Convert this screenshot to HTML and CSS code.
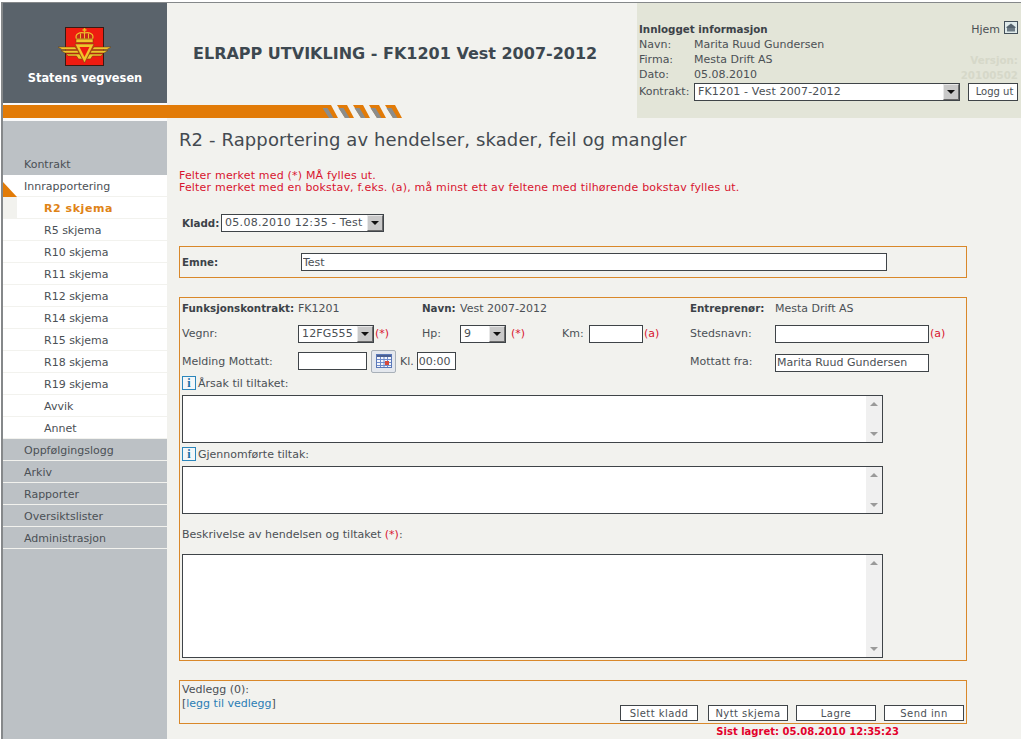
FILE: index.html
```html
<!DOCTYPE html>
<html lang="no">
<head>
<meta charset="utf-8">
<title>ELRAPP</title>
<link rel="stylesheet" href="styles.css">
</head>
<body>
<div class="page">
  <header class="header">
    <div class="header-left">
      <div class="brand-row">
        <div class="brand">
          <svg class="logo" width="60" height="39" viewBox="0 0 60 39">
            <rect x="10.500" y=".5" width="38" height="38" fill="#ee1c10" stroke="#3a1a12"/>
            <!-- crown -->
            <path d="M29.500 1v5M27.500 3h4" stroke="#e8b820" stroke-width="1.500" fill="none"/>
            <path d="M21.500 12c-2-5 3-7 8-6 5-1 10 1 8 6z" fill="#c8281a" stroke="#eec02a" stroke-width="1.200"/>
            <path d="M25.500 6.500v5.500M29.500 6v6M33.500 6.500v5.500" stroke="#eec02a"/>
            <rect x="21" y="12" width="17" height="3.500" fill="#f2c42a" stroke="#6b3a10" stroke-width=".5"/>
            <!-- wings -->
            <path d="M3 20h17l2 2.500H7z M6 23.500h16.500l1.500 2.500H10z M11 27h13.500l3 5h-4l-2-3H13z" fill="#efc52c" stroke="#6b3a10" stroke-width=".5"/>
            <path d="M56 20H39l-2 2.500h15z M53 23.500H36.500L35 26h14z M48 27H34.500l-3 5h4l2-3H46z" fill="#efc52c" stroke="#6b3a10" stroke-width=".5"/>
            <!-- road triangle -->
            <path d="M20 17h19l-9.500 19z" fill="#f2c42a" stroke="#6b3a10" stroke-width=".5"/>
            <path d="M24.500 20h10l-5 10z" fill="#ee1c10"/>
          </svg>
          <div class="brand-name">Statens vegvesen</div>
        </div>
        <h1 class="app-title">ELRAPP UTVIKLING - FK1201 Vest 2007-2012</h1>
      </div>
      <div class="bar">
        <svg class="stripes" width="82" height="13" viewBox="0 0 82 13">
          <g id="stripe-set">
            <path d="M0 0h10l7 13H8z" fill="#e27b07"/><path d="M1.500 3h5l6 10H8z" fill="#8b8d8c"/>
            <path d="M16 0h10l7 13h-9z" fill="#e27b07"/><path d="M17.500 3h5l6 10H24z" fill="#8b8d8c"/>
            <path d="M32 0h10l7 13h-9z" fill="#e27b07"/><path d="M33.500 3h5l6 10H40z" fill="#8b8d8c"/>
            <path d="M48 0h10l7 13h-9z" fill="#e27b07"/><path d="M49.500 3h5l6 10H56z" fill="#8b8d8c"/>
            <path d="M64 0h10l7 13h-9z" fill="#e27b07"/><path d="M65.500 3h5l6 10H72z" fill="#8b8d8c"/>
          </g>
        </svg>
      </div>
    </div>
    <section class="info">
      <div class="info-row info-top">
        <strong>Innlogget informasjon</strong>
        <span class="home">Hjem
          <svg class="home-icon" width="14" height="13" viewBox="0 0 14 13">
            <rect x=".5" y=".5" width="13" height="12" fill="#dfeaea" stroke="#44505a"/>
            <path d="M7 2.500l4.500 3.500v1H2.500V6z" fill="#55636e"/>
            <rect x="3" y="7" width="8" height="3.500" fill="#6c7a84"/>
          </svg>
        </span>
      </div>
      <div class="info-row"><span class="info-label">Navn:</span><span>Marita Ruud Gundersen</span></div>
      <div class="info-row"><span class="info-label">Firma:</span><span>Mesta Drift AS</span><span class="ghost">Versjon:</span></div>
      <div class="info-row"><span class="info-label">Dato:</span><span>05.08.2010</span><span class="ghost">20100502</span></div>
      <div class="info-row info-controls">
        <span class="info-label">Kontrakt:</span>
        <span class="sel sel-contract">
          <select><option>FK1201 - Vest 2007-2012</option></select>
          <span class="sel-btn"></span>
        </span>
        <button class="btn btn-logout" type="button">Logg ut</button>
      </div>
    </section>
  </header>

  <div class="body">
    <nav class="nav">
      <a class="nav-top">Kontrakt</a>
      <a class="nav-top nav-open">Innrapportering</a>
      <a class="nav-sub nav-active">R2 skjema</a>
      <a class="nav-sub">R5 skjema</a>
      <a class="nav-sub">R10 skjema</a>
      <a class="nav-sub">R11 skjema</a>
      <a class="nav-sub">R12 skjema</a>
      <a class="nav-sub">R14 skjema</a>
      <a class="nav-sub">R15 skjema</a>
      <a class="nav-sub">R18 skjema</a>
      <a class="nav-sub">R19 skjema</a>
      <a class="nav-sub">Avvik</a>
      <a class="nav-sub">Annet</a>
      <a class="nav-top nav-line">Oppfølgingslogg</a>
      <a class="nav-top nav-line">Arkiv</a>
      <a class="nav-top nav-line">Rapporter</a>
      <a class="nav-top nav-line">Oversiktslister</a>
      <a class="nav-top nav-line">Administrasjon</a>
    </nav>

    <main class="main">
      <h2 class="page-title">R2 - Rapportering av hendelser, skader, feil og mangler</h2>
      <p class="notice">Felter merket med (*) MÅ fylles ut.<br>Felter merket med en bokstav, f.eks. (a), må minst ett av feltene med tilhørende bokstav fylles ut.</p>

      <div class="draft">
        <strong class="draft-label">Kladd:</strong>
        <span class="sel sel-draft">
          <select><option>05.08.2010 12:35 - Test</option></select>
          <span class="sel-btn"></span>
        </span>
      </div>

      <div class="box box-subject">
        <strong class="subject-label">Emne:</strong>
        <input class="field field-subject" type="text" value="Test">
      </div>

      <div class="box box-form">
        <div class="grid">
          <strong>Funksjonskontrakt:</strong><span>FK1201</span>
          <strong>Navn:</strong><span>Vest 2007-2012</span>
          <span></span><span></span>
          <strong>Entreprenør:</strong><span>Mesta Drift AS</span>

          <span>Vegnr:</span>
          <span class="ctl"><span class="sel sel-road"><select><option>12FG555</option></select><span class="sel-btn"></span></span><span class="req">(*)</span></span>
          <span>Hp:</span>
          <span class="ctl"><span class="sel sel-hp"><select><option>9</option></select><span class="sel-btn"></span></span><span class="req req-hp">(*)</span></span>
          <span>Km:</span>
          <span class="ctl"><input class="field field-km" type="text"><span class="req">(a)</span></span>
          <span>Stedsnavn:</span>
          <span class="ctl"><input class="field field-place" type="text"><span class="req">(a)</span></span>

          <span>Melding Mottatt:</span>
          <span class="ctl ctl-date">
            <input class="field field-date" type="text">
            <span class="cal">
              <svg width="16" height="14" viewBox="0 0 16 14">
                <rect x=".5" y=".5" width="15" height="13" fill="#f4f6fb" stroke="#5a78b8"/>
                <rect x="1" y="1" width="14" height="2" fill="#4a5f90"/>
                <path d="M1 5.500h14M1 8.500h14M1 11.500h14M4.500 3v10M8 3v10M11.500 3v10" stroke="#6f8ccc" fill="none"/>
                <rect x="9" y="7" width="4" height="4" fill="#d84a3a"/>
              </svg>
            </span>
            <span class="kl">Kl.</span>
            <input class="field field-time" type="text" value="00:00">
          </span>
          <span></span><span></span><span></span><span></span>
          <span>Mottatt fra:</span>
          <span class="ctl ctl-from"><input class="field field-place" type="text" value="Marita Ruud Gundersen"></span>
        </div>

        <div class="label-line label-first"><span class="info-i">i</span>Årsak til tiltaket:</div>
        <div class="area area-short"><textarea></textarea><span class="scroll"><i class="up"></i><i class="down"></i></span></div>

        <div class="label-line label-second"><span class="info-i">i</span>Gjennomførte tiltak:</div>
        <div class="area area-short"><textarea></textarea><span class="scroll"><i class="up"></i><i class="down"></i></span></div>

        <div class="label-third">Beskrivelse av hendelsen og tiltaket <span class="req-inline">(*)</span>:</div>
        <div class="area area-tall"><textarea></textarea><span class="scroll"><i class="up"></i><i class="down"></i></span></div>
      </div>

      <div class="box box-attach">
        <div class="attach-text">
          <div>Vedlegg (0):</div>
          <div class="attach-link">[<a>legg til vedlegg</a>]</div>
        </div>
        <div class="actions">
          <button class="btn btn-action btn-a" type="button">Slett kladd</button>
          <button class="btn btn-action" type="button">Nytt skjema</button>
          <button class="btn btn-action" type="button">Lagre</button>
          <button class="btn btn-action" type="button">Send inn</button>
        </div>
      </div>
      <div class="saved">Sist lagret: 05.08.2010 12:35:23</div>
    </main>
  </div>
</div>
</body>
</html>
```
FILE: styles.css
```css
* { box-sizing: border-box; }
html, body { margin: 0; height: 100%; overflow: hidden; background: #fff; }
body { font: 11px/13px "DejaVu Sans", Verdana, sans-serif; color: #4b5055; }
button, input, select, textarea { font: inherit; color: inherit; }
strong { color: #3c4248; font-size: 10.3px; }
.page { margin: 2px 0 0 1px; height: 737px; border-top: 1px solid #85888a; border-left: 2px solid #85888a; background: #f2f2ee; display: flex; flex-direction: column; }

/* header */
.header { display: flex; height: 115px; flex: none; }
.header-left { width: 634px; flex: none; display: flex; flex-direction: column; }
.brand-row { display: flex; height: 102px; }
.brand { width: 164px; flex: none; background: #5a636b; border-bottom: 2px solid #fafafa; display: flex; flex-direction: column; align-items: center; padding-top: 24px; }
.logo { display: block; }
.brand-name { margin-top: 5px; color: #fff; font-weight: bold; font-size: 11.4px; line-height: 15px; }
.app-title { margin: 0; padding: 41px 0 0 26px; font: bold 16px/20px "DejaVu Sans", sans-serif; color: #3d4850; white-space: nowrap; }
.bar { height: 13px; background: linear-gradient(#e27b07, #e27b07) left / 326px 13px no-repeat; position: relative; }
.stripes { position: absolute; left: 318px; top: 0; }

.info { flex: 1; background: #e3e5d8; padding: 20px 3px 0 2px; }
.info-row { display: flex; height: 15px; line-height: 12px; position: relative; }
.info-top { justify-content: space-between; height: 16px; }
.info-label { width: 55px; flex: none; }
.home { display: inline-flex; gap: 4px; align-items: flex-start; padding-top: 1px; }
.home-icon { margin-top: -3px; }
.ghost { margin-left: auto; color: #d6d8c9; font-weight: bold; font-size: 10.3px; }
.info-controls { height: 18px; margin-top: -1px; align-items: center; }
.btn { background: #fff; border: 1px solid #3f4448; border-radius: 0; padding: 0; height: 18px; font-size: 10px; }
.btn-logout { width: 50px; margin-left: 8px; padding-left: 3px; }

/* selects */
.sel { position: relative; display: inline-block; height: 18px; background: #fff; flex: none; }
.sel select { appearance: none; -webkit-appearance: none; display: block; width: 100%; height: 18px; border: 1px solid #3f4448; border-radius: 0; background: #fff; padding: 0 0 1px 3px; letter-spacing: .15px; }
.sel-btn { position: absolute; right: 1px; top: 1px; width: 16px; height: 16px; background: #c9c9c9; border: 1px solid #8c8c8c; border-color: #e8e8e8 #6b6b6b #6b6b6b #e8e8e8; }
.sel-btn::after { content: ""; position: absolute; left: 3px; top: 5px; border: 4px solid transparent; border-top-color: #111; border-bottom-width: 0; }
.sel-contract { width: 266px; }
.sel-draft { width: 163px; }
.sel-draft select { letter-spacing: .3px; }
.sel-road { width: 76px; }
.sel-hp { width: 46px; }

/* layout */
.body { display: flex; flex: 1; min-height: 0; }
.nav { width: 164px; flex: none; background: #bcc1c5; border-top: 3px solid #fafafa; padding-top: 32px; display: flex; flex-direction: column; }
.nav a { display: block; height: 22px; line-height: 24px; white-space: nowrap; }
.nav-top { padding-left: 21px; }
.nav-line { border-bottom: 1px solid #f2f2ee; }
.nav-open { background: #fff; border-bottom: 1px solid #f2f2ee; position: relative; }
.nav-open::before { content: ""; position: absolute; left: 0; top: 7px; border-style: solid; border-width: 15px 0 0 14px; border-color: transparent transparent transparent #e27b07; }
.nav-sub { padding-left: 41px; background: #fff; border-bottom: 1px solid #f2f2ee; }
.nav-active { color: #df8316; font-weight: bold; border-left: 14px solid #f2f2ee; padding-left: 27px; letter-spacing: .55px; }

.main { flex: 1; padding: 3px 0 0 12px; min-width: 0; }
.page-title { margin: 0; padding-top: 8px; font: normal 18px/22px "DejaVu Sans", sans-serif; letter-spacing: .11px; color: #444a50; white-space: nowrap; }
.notice { margin: 19px 0 0; color: #d8142e; line-height: 12px; letter-spacing: .19px; }
.draft { display: flex; align-items: center; gap: 3px; margin-top: 20px; padding-left: 3px; height: 18px; }
.draft-label { width: 36px; flex: none; }

.box { border: 1px solid #d9882a; width: 788px; }
.box-subject { height: 32px; margin-top: 14px; display: flex; align-items: center; padding-left: 2px; }
.subject-label { width: 119px; flex: none; }
.field { border: 1px solid #3f4448; background: #fff; height: 18px; padding: 0 1px; border-radius: 0; display: block; flex: none; outline: 0; }
.field-subject { width: 586px; }

.box-form { height: 364px; margin-top: 19px; padding: 0 2px; }
.grid { display: grid; grid-template-columns: 116px 124px 38px 102px 27px 101px 85px 1fr; grid-template-rows: 21px 29px 26px; align-items: center; }
.ctl { display: flex; align-items: center; }
.ctl-date { white-space: nowrap; }
.ctl-from { margin-top: 3px; }
.req { color: #d8142e; margin-left: 1px; }
.req-hp { margin-left: 5px; }
.req-inline { color: #d8142e; }
.field-km { width: 54px; }
.field-place { width: 154px; }
.field-date { width: 69px; }
.cal { flex: none; width: 25px; height: 23px; margin-left: 4px; border: 1px solid #a8b0b8; border-radius: 2px; background: #e4e8ee; display: flex; align-items: center; justify-content: center; }
.kl { margin-left: 4px; }
.field-time { width: 39px; margin-left: 3px; }

.label-line { display: flex; align-items: center; gap: 2px; white-space: pre; height: 14px; }
.label-first { margin-top: 2px; }
.label-second { margin-top: 4px; }
.label-third { margin-top: 14px; height: 13px; }
.info-i { width: 14px; height: 14px; flex: none; border: 1px solid #2b86bb; background: #f3f7f9; color: #1d6fa3; font: bold 12px/12px "Liberation Serif", serif; text-align: center; }
.area { display: flex; width: 701px; border: 1px solid #3f4448; background: #fff; margin-top: 5px; }
.area-short { height: 48px; }
.area-tall { height: 104px; margin-top: 13px; }
.area textarea { flex: 1; border: 0; resize: none; outline: 0; background: #fff; padding: 2px; overflow: hidden; }
.scroll { width: 16px; flex: none; background: #f0f0f0; position: relative; }
.scroll i { position: absolute; left: 4px; border: 4px solid transparent; }
.up { top: 6px; border-bottom-color: #9a9a9a !important; border-top-width: 0 !important; }
.down { bottom: 6px; border-top-color: #9a9a9a !important; border-bottom-width: 0 !important; }

.box-attach { height: 44px; margin-top: 19px; padding: 2px 2px 0; display: flex; justify-content: space-between; }
.attach-text { line-height: 14px; }
.attach-link a { color: #2a7db5; }
.actions { display: flex; gap: 8px; padding-top: 22px; }
.btn-action { width: 80px; height: 16px; line-height: 13px; font-size: 10px; letter-spacing: .45px; }
.btn-a { width: 78px; margin-right: 2px; }
.saved { width: 720px; margin-top: 1px; text-align: right; color: #e3002b; font-weight: bold; font-size: 10px; line-height: 13px; }
```
